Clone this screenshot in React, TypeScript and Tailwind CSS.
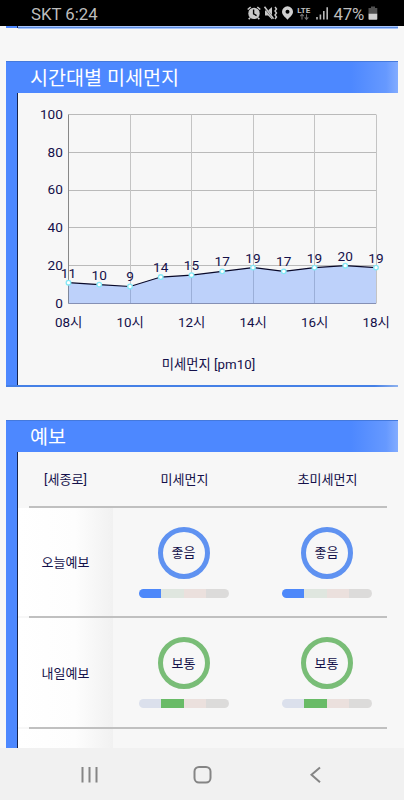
import type { ReactNode } from 'react';

const HOURLY = [11, 10, 9, 14, 15, 17, 19, 17, 19, 20, 19];
const HOURS = ['08', '10', '12', '14', '16', '18'];
const TICKS = [0, 20, 40, 60, 80, 100];

const LEFT = 50.5;
const RIGHT = 358;
const BASE = 210.5;
const px = (i: number) => LEFT + ((RIGHT - LEFT) / 10) * i;
const py = (v: number) => BASE - v * 1.89;

const StatusBar = () => (
    <header className="h-[26px] shrink-0 bg-black flex items-center pl-[31px] pr-[26px] text-[#bdbdbd]">
        <span className="text-[16.8px] leading-[26px] grow pt-px">SKT 6:24</span>
        <svg width="86" height="26" viewBox="0 0 86 26" fill="none" className="shrink-0">
            {/* alarm */}
            <circle cx="7" cy="13.4" r="5.7" fill="#c8c8c8" />
            <path d="M.7 9.5 3.7 7M13.3 9.5 10.3 7M3 17.7l-1.3 1.6M11 17.7l1.3 1.6" stroke="#c8c8c8" strokeWidth="1.6" />
            <path d="M6.6 9.5v4.4l3 1.7" stroke="#000" strokeWidth="1.4" />
            {/* vibrate */}
            <path d="M18 10.5h3l4-3.5v12.5l-4-4h-3z" fill="#c8c8c8" />
            <path d="m17 6.5 9.5 12" stroke="#000" strokeWidth="2" />
            <path d="m17.5 6.8 9 12" stroke="#c8c8c8" strokeWidth="1.5" />
            <path d="m28 7 1.5 2-1.5 2 1.5 2-1.5 2 1.5 2-1.5 2" stroke="#c8c8c8" strokeWidth="1.4" />
            {/* location */}
            <path d="M40.5 6.3a5.5 5.5 0 0 0-5.5 5.5c0 3.3 3.3 5.4 5.5 7.9 2.2-2.5 5.5-4.6 5.5-7.9a5.5 5.5 0 0 0-5.5-5.5Z" fill="#d0d0d0" />
            <circle cx="40.5" cy="11.8" r="2" fill="#000" />
            <text x="50.3" y="12.9" fontSize="8" fontWeight="700" fill="#c0c0c0" fontFamily="Roboto">LTE</text>
            <path d="M55 19.4v-5M53.2 16.2l1.8-2 1.8 2M59.5 14.2v5M57.7 17.4l1.8 2 1.8-2" stroke="#707070" strokeWidth="1.1" />
            {/* signal */}
            <path d="M70 19.4v-2.4M73.4 19.4v-5M76.8 19.4v-8.4M80.2 19.4V7.3" stroke="#b8b8b8" strokeWidth="1.6" />
        </svg>
        <span className="text-[16.8px] leading-[26px] tracking-[-0.2px] shrink-0 pt-px">47%</span>
        <svg width="10" height="26" viewBox="0 0 10 26" className="shrink-0 ml-[4px]">
            <path d="M3 6.5h4v1.5h2.3v6H.5V8H3z" fill="#505050" />
            <path d="M.5 13.8h8.8v5.2q0 .8-.8.8H1.3q-.8 0-.8-.8z" fill="#d0d0d0" />
        </svg>
    </header>
);

const Panel = ({ title, children }: { title: string; children: ReactNode }) => (
    <>
        <h2 className="h-8 shrink-0 border-t border-[#4579dc] pl-6 text-[19.6px] leading-[34px] font-normal text-white bg-[linear-gradient(to_right,#4d88ff_0%,#4d88ff_88%,#6699ff_97%,#83acff_100%)]">
            {title}
        </h2>
        <div className="grow min-h-0 flex">
            <div className="w-3 shrink-0 bg-[#4d88ff] border-r border-[#16244d]" />
            <div className="grow min-w-0 flex flex-col">{children}</div>
        </div>
    </>
);

const Chart = () => {
    const line = HOURLY.map((v, i) => `${px(i)},${py(v)}`).join(' ');
    return (
        <svg width="380" height="292" viewBox="0 0 380 292" fontSize="13.6" fill="#14104a">
            {TICKS.map((t) => (
                <g key={t}>
                    <path d={`M${LEFT} ${Math.floor(py(t)) + 0.5}H${RIGHT}`} stroke="#bababa" />
                    <text x="44.8" y={py(t) + 4.2} textAnchor="end">{t}</text>
                </g>
            ))}
            {HOURS.map((h, i) => (
                <g key={h}>
                    <path d={`M${Math.floor(px(i * 2)) + 0.5} 21.5V${BASE}`} stroke={i === 0 ? '#888' : '#c4c4c4'} />
                    <text x={px(i * 2) + 0.2} y="234" textAnchor="middle" fontSize="13.4">{h}시</text>
                </g>
            ))}
            <polygon points={`${LEFT},${BASE} ${line} ${RIGHT},${BASE}`} fill="#4d88ff" fillOpacity="0.34" />
            <path d={`M${LEFT} ${BASE}H${RIGHT}`} stroke="#8590b5" />
            <polyline points={line} fill="none" stroke="#080828" strokeWidth="1.2" />
            {HOURLY.map((v, i) => (
                <g key={i}>
                    <circle cx={px(i)} cy={py(v)} r="2.3" fill="#fff" stroke="#84e8f6" strokeWidth="1.3" />
                    <text x={px(i)} y={py(v) - 5} textAnchor="middle">{v}</text>
                </g>
            ))}
            <text x="190.5" y="275.5" textAnchor="middle" fontSize="13.3">미세먼지 [pm10]</text>
        </svg>
    );
};

const Level = ({ level }: { level: 'good' | 'normal' }) => {
    const good = level === 'good';
    return (
        <div className="w-[143px] shrink-0 flex flex-col items-center pt-[19px]">
            <div className={`size-[52px] rounded-full border-[5px] flex items-center justify-center text-[13px] ${good ? 'border-[#5f92f1]' : 'border-[#79bd77]'}`}>
                <span>{good ? '좋음' : '보통'}</span>
            </div>
            <div className="mt-[10px] w-[90px] h-[9px] rounded-full overflow-hidden grid grid-cols-4">
                <i className={good ? 'bg-[#4d88fa]' : 'bg-[#dbe0ec]'} />
                <i className={good ? 'bg-[#dfe6df]' : 'bg-[#69bb67]'} />
                <i className="bg-[#ebe0dd]" />
                <i className="bg-[#dcdbda]" />
            </div>
        </div>
    );
};

const Divider = () => <div className="h-[2px] shrink-0 ml-[11px] w-[358px] bg-[#c0c0c0]" />;

const LABEL_BG = 'bg-[linear-gradient(to_right,#ffffff_0%,#fdfdfd_60%,#f1f1f1_100%)]';

const Row = ({ label, level }: { label: string; level: 'good' | 'normal' }) => (
    <div className="h-[108.4px] shrink-0 flex">
        <div className={`w-[95px] shrink-0 flex items-center justify-center pt-[2px] ${LABEL_BG}`}>{label}</div>
        <div className="-ml-px flex">
            <Level level={level} />
            <Level level={level} />
        </div>
    </div>
);

const App = () => (
    <div className="w-[404px] h-[800px] overflow-hidden flex flex-col bg-[#f7f7f7] text-[#14104a] font-['Roboto','Noto_Sans_CJK_KR',sans-serif]">
        <StatusBar />
        <div className="h-[3px] shrink-0 mx-[6px] flex">
            <div className="w-3 h-[2px] bg-[#4d88ff] border-r border-[#16244d]" />
            <div className="grow border-t border-[#a8c6fc] bg-[#a8c6fc]">
                <div className="h-px bg-[#5b8be0]" />
            </div>
        </div>

        <section className="mt-8 h-[326px] shrink-0 mx-[6px] flex flex-col">
            <Panel title="시간대별 미세먼지">
                <Chart />
            </Panel>
            <div className="h-[2px] shrink-0 bg-[linear-gradient(to_right,#4580e6_0%,#4580e6_94%,#8fb2ee_100%)]" />
        </section>

        <section className="mt-[33px] h-[328px] shrink-0 mx-[6px] flex flex-col">
            <Panel title="예보">
                <div className="h-[54px] shrink-0 flex items-center text-center text-[13px] pt-[2px]">
                    <span className="w-[95px] shrink-0">[세종로]</span>
                    <span className="w-[143px] shrink-0">미세먼지</span>
                    <span className="w-[143px] shrink-0">초미세먼지</span>
                </div>
                <Divider />
                <div className="grow min-h-0 flex flex-col text-[13px]">
                    <Row label="오늘예보" level="good" />
                    <Divider />
                    <Row label="내일예보" level="normal" />
                    <Divider />
                    <div className={`w-[95px] grow ${LABEL_BG}`} />
                </div>
            </Panel>
        </section>

        <nav className="h-[52px] shrink-0 bg-[#f1f1f1]">
            <svg width="404" height="52" viewBox="0 0 404 52" fill="none" stroke="#858585" strokeWidth="2">
                <path d="M82.5 19v15.5M89.5 19v15.5M96.5 19v15.5" />
                <rect x="194.5" y="19" width="16" height="15.5" rx="4.5" />
                <path d="m320 19.5-8.5 7.3 8.5 7.5" />
            </svg>
        </nav>
    </div>
);

export default App;
